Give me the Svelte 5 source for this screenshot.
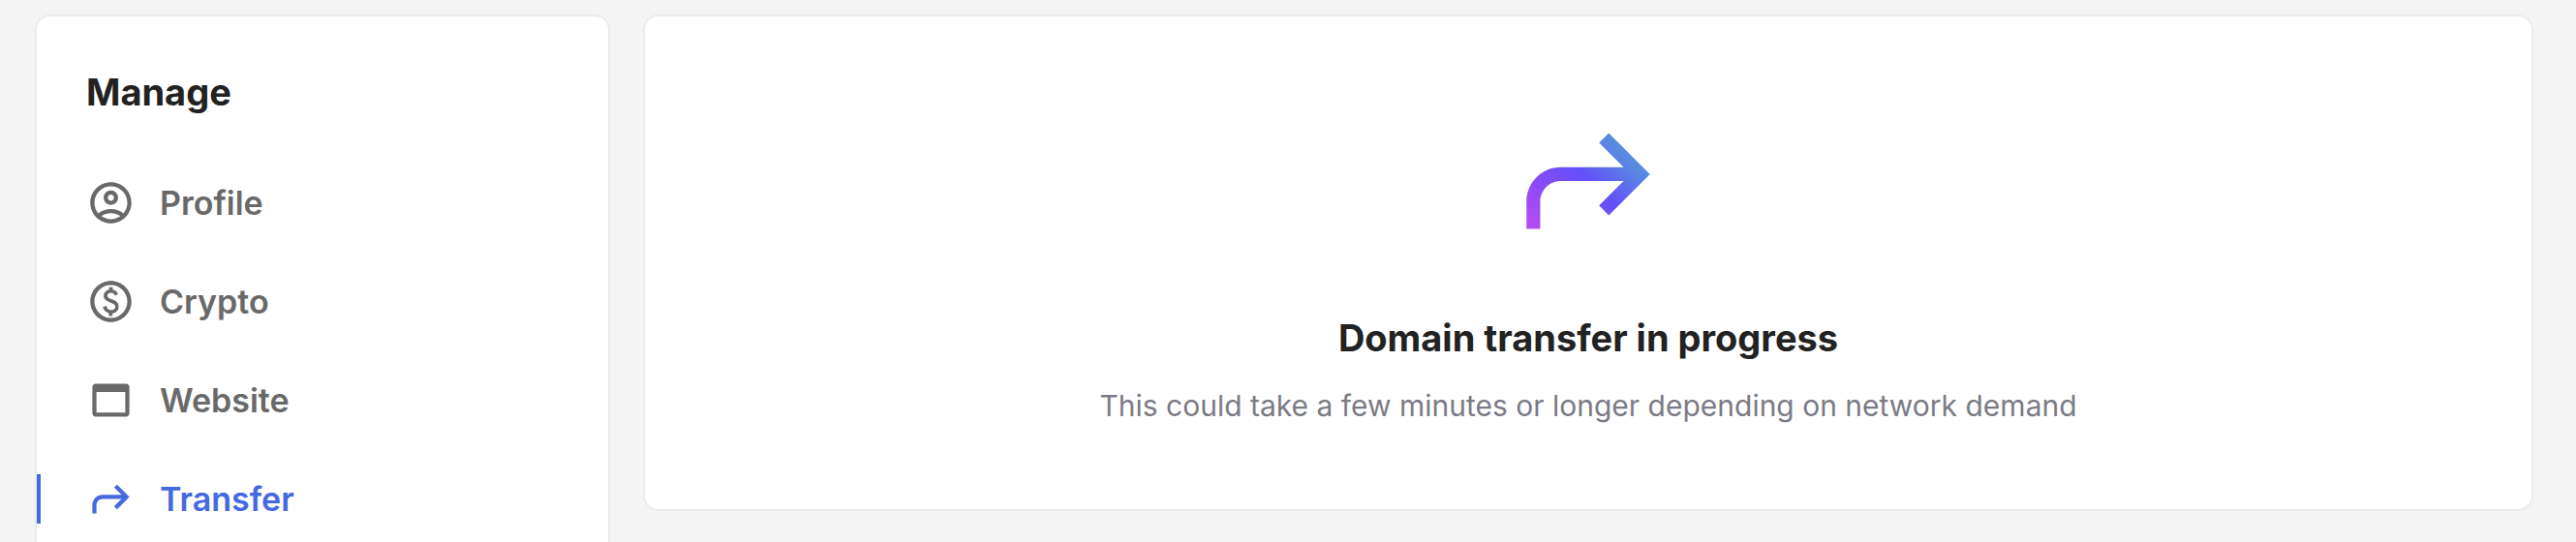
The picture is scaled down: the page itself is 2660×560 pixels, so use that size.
<script>
  const links = [
    {
      name: "Profile",
      icon: "M12 2C6.48 2 2 6.48 2 12s4.48 10 10 10 10-4.48 10-10S17.52 2 12 2zM7.35 18.5C8.66 17.56 10.26 17 12 17s3.34.56 4.65 1.5c-1.31.94-2.91 1.5-4.65 1.5s-3.34-.56-4.65-1.5zm10.79-1.38C16.45 15.8 14.32 15 12 15s-4.45.8-6.14 2.12C4.7 15.73 4 13.95 4 12c0-4.42 3.58-8 8-8s8 3.58 8 8c0 1.95-.7 3.73-1.86 5.12zM12 6c-1.93 0-3.5 1.57-3.5 3.5S10.07 13 12 13s3.5-1.57 3.5-3.5S13.93 6 12 6zm0 5c-.83 0-1.5-.67-1.5-1.5S11.17 8 12 8s1.5.67 1.5 1.5S12.83 11 12 11z",
    },
    {
      name: "Crypto",
      icon: "M12 2C6.48 2 2 6.48 2 12s4.48 10 10 10 10-4.48 10-10S17.52 2 12 2zm0 18c-4.41 0-8-3.59-8-8s3.59-8 8-8 8 3.59 8 8-3.59 8-8 8zm.89-8.9c-1.78-.59-2.64-.96-2.64-1.9 0-1.02 1.11-1.39 1.81-1.39 1.31 0 1.79.99 1.9 1.34l1.58-.67c-.15-.44-.82-1.91-2.66-2.23V5h-1.75v1.26c-2.6.56-2.62 2.85-2.62 2.96 0 2.27 2.25 2.91 3.35 3.31 1.58.56 2.28 1.07 2.28 2.03 0 1.13-1.05 1.61-1.98 1.61-1.82 0-2.34-1.87-2.4-2.09l-1.66.67c.63 2.19 2.28 2.78 2.9 2.96V19h1.75v-1.24c.52-.09 3.02-.59 3.02-3.22.02-1.39-.59-2.61-2.88-3.44z",
    },
    {
      name: "Website",
      icon: "M19.4 4H4.6C3.7 4 3 4.7 3 5.6v12.8c0 .9.7 1.6 1.6 1.6h14.8c.9 0 1.6-.7 1.6-1.6V5.6c0-.9-.7-1.6-1.6-1.6zM19 18H5V8h14v10z",
    },
    {
      name: "Transfer",
      icon: "m15 5-1.41 1.41L15 7.83 17.17 10H8c-2.76 0-5 2.24-5 5v4h2v-4c0-1.65 1.35-3 3-3h9.17L15 14.17l-1.41 1.41L15 17l6-6-6-6z",
    },
  ];
  let active = $state("Transfer");
</script>

<div class="page">
  <aside class="sidebar">
    <h2>Manage</h2>
    <nav>
      {#each links as link}
        <a
          href="#{link.name.toLowerCase()}"
          class:active={active === link.name}
          aria-current={active === link.name ? "page" : undefined}
          onclick={() => (active = link.name)}
        >
          <svg viewBox="0 0 24 24" aria-hidden="true"><path d={link.icon} /></svg>
          <span>{link.name}</span>
        </a>
      {/each}
    </nav>
  </aside>

  <main class="panel">
    <svg class="transfer-icon" viewBox="0 0 24 24" aria-hidden="true">
      <defs>
        <linearGradient id="arrow" gradientUnits="userSpaceOnUse" x1="3" y1="19" x2="16" y2="5">
          <stop offset="0" stop-color="#bc4bf2" />
          <stop offset="0.3" stop-color="#8c4bf8" />
          <stop offset="0.6" stop-color="#6350f8" />
          <stop offset="0.85" stop-color="#5a80e6" />
          <stop offset="1" stop-color="#5694da" />
        </linearGradient>
      </defs>
      <path fill="url(#arrow)" d={links[3].icon} />
    </svg>
    <h1>Domain transfer in progress</h1>
    <p>This could take a few minutes or longer depending on network demand</p>
  </main>
</div>

<style>
  :global(body) {
    background: #f4f4f4;
    font-family: Inter, "Liberation Sans", sans-serif;
  }
  .page {
    display: grid;
    grid-template-columns: 594px 1fr;
    align-items: start;
    gap: 34px;
    padding: 15px 44px 0 36px;
  }
  .sidebar,
  .panel {
    box-sizing: border-box;
    background: #fff;
    border: 2px solid #ebebed;
    border-radius: 16px;
  }
  .sidebar {
    min-height: calc(100vh - 15px);
    padding-top: 53px;
    border-bottom: 0;
    border-radius: 16px 16px 0 0;
  }
  h1,
  h2 {
    margin: 0;
    color: #222;
    font-size: 38px;
    font-weight: 700;
    line-height: 50px;
  }
  h2 {
    padding-left: 51px;
  }
  nav {
    display: flex;
    flex-direction: column;
    gap: 51px;
    padding-top: 64px;
  }
  a {
    display: flex;
    align-items: center;
    gap: 25px;
    padding-left: 47px;
    border-left: 4px solid transparent;
    color: #696969;
    font-size: 34px;
    font-weight: 600;
    line-height: 51px;
    text-decoration: none;
  }
  a svg {
    width: 51px;
    height: 51px;
    fill: currentColor;
  }
  a.active {
    border-left-color: #4469e1;
    color: #4469e1;
  }
  .panel {
    display: flex;
    flex-direction: column;
    align-items: center;
    padding: 85px 32px 83px;
    text-align: center;
  }
  .transfer-icon {
    width: 170px;
    height: 170px;
  }
  h1 {
    margin-top: 52px;
  }
  p {
    margin: 21px 0 0;
    color: #7b7b85;
    font-size: 30px;
    line-height: 48px;
  }
</style>
